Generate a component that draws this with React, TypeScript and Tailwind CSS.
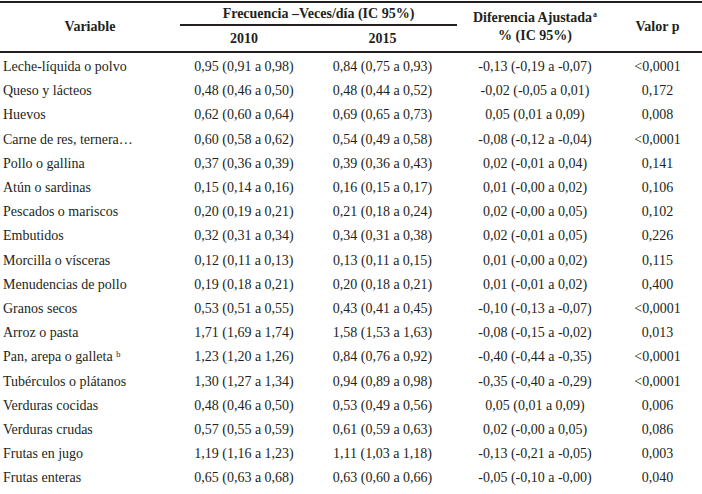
import React from 'react'

const rows: [string, string, string, string, string][] = [
  ['Leche-líquida o polvo', '0,95 (0,91 a 0,98)', '0,84 (0,75 a 0,93)', '-0,13 (-0,19 a -0,07)', '<0,0001'],
  ['Queso y lácteos', '0,48 (0,46 a 0,50)', '0,48 (0,44 a 0,52)', '-0,02 (-0,05 a 0,01)', '0,172'],
  ['Huevos', '0,62 (0,60 a 0,64)', '0,69 (0,65 a 0,73)', '0,05 (0,01 a 0,09)', '0,008'],
  ['Carne de res, ternera…', '0,60 (0,58 a 0,62)', '0,54 (0,49 a 0,58)', '-0,08 (-0,12 a -0,04)', '<0,0001'],
  ['Pollo o gallina', '0,37 (0,36 a 0,39)', '0,39 (0,36 a 0,43)', '0,02 (-0,01 a 0,04)', '0,141'],
  ['Atún o sardinas', '0,15 (0,14 a 0,16)', '0,16 (0,15 a 0,17)', '0,01 (-0,00 a 0,02)', '0,106'],
  ['Pescados o mariscos', '0,20 (0,19 a 0,21)', '0,21 (0,18 a 0,24)', '0,02 (-0,00 a 0,05)', '0,102'],
  ['Embutidos', '0,32 (0,31 a 0,34)', '0,34 (0,31 a 0,38)', '0,02 (-0,01 a 0,05)', '0,226'],
  ['Morcilla o vísceras', '0,12 (0,11 a 0,13)', '0,13 (0,11 a 0,15)', '0,01 (-0,00 a 0,02)', '0,115'],
  ['Menudencias de pollo', '0,19 (0,18 a 0,21)', '0,20 (0,18 a 0,21)', '0,01 (-0,01 a 0,02)', '0,400'],
  ['Granos secos', '0,53 (0,51 a 0,55)', '0,43 (0,41 a 0,45)', '-0,10 (-0,13 a -0,07)', '<0,0001'],
  ['Arroz o pasta', '1,71 (1,69 a 1,74)', '1,58 (1,53 a 1,63)', '-0,08 (-0,15 a -0,02)', '0,013'],
  ['Pan, arepa o galleta ᵇ', '1,23 (1,20 a 1,26)', '0,84 (0,76 a 0,92)', '-0,40 (-0,44 a -0,35)', '<0,0001'],
  ['Tubérculos o plátanos', '1,30 (1,27 a 1,34)', '0,94 (0,89 a 0,98)', '-0,35 (-0,40 a -0,29)', '<0,0001'],
  ['Verduras cocidas', '0,48 (0,46 a 0,50)', '0,53 (0,49 a 0,56)', '0,05 (0,01 a 0,09)', '0,006'],
  ['Verduras crudas', '0,57 (0,55 a 0,59)', '0,61 (0,59 a 0,63)', '0,02 (-0,00 a 0,05)', '0,086'],
  ['Frutas en jugo', '1,19 (1,16 a 1,23)', '1,11 (1,03 a 1,18)', '-0,13 (-0,21 a -0,05)', '0,003'],
  ['Frutas enteras', '0,65 (0,63 a 0,68)', '0,63 (0,60 a 0,66)', '-0,05 (-0,10 a -0,00)', '0,040'],
]

export default function App() {
  return (
    <div className="w-[702px] h-[494px] overflow-hidden bg-white text-[#231f20] font-[family-name:Liberation_Serif,serif] text-[14px] leading-none">
      <div className="mt-px border-t-2 border-[#231f20]" />
      {/* header */}
      <div className="grid grid-cols-[180px_128px_149px_156px_89px] h-[50px] border-b-2 border-[#231f20] font-bold">
        <div className="flex items-center justify-center">Variable</div>
        <div className="col-span-2 flex flex-col">
          <div className="h-[23px] flex items-center justify-center border-b-2 border-[#231f20] pt-px">
            Frecuencia –Veces/día (IC 95%)
          </div>
          <div className="flex-1 grid grid-cols-[128px_149px]">
            <div className="flex items-center justify-center">2010</div>
            <div className="flex items-center justify-center">2015</div>
          </div>
        </div>
        <div className="flex flex-col items-center justify-center gap-[4px]">
          <div className="h-[14px] flex items-start">
            Diferencia Ajustada
            <span className="text-[8px] leading-none ml-px">a</span>
          </div>
          <div className="h-[14px]">% (IC 95%)</div>
        </div>
        <div className="flex items-center justify-center">Valor p</div>
      </div>
      {/* body */}
      <div className="flex flex-col pt-[2px]">
        {rows.map((r) => (
          <div key={r[0]} className="grid grid-cols-[180px_128px_149px_156px_89px] h-[24.2px] items-center">
            <div className="pl-[3px] whitespace-nowrap">{r[0]}</div>
            <div className="text-center">{r[1]}</div>
            <div className="text-center">{r[2]}</div>
            <div className="text-center">{r[3]}</div>
            <div className="text-center">{r[4]}</div>
          </div>
        ))}
      </div>
    </div>
  )
}
